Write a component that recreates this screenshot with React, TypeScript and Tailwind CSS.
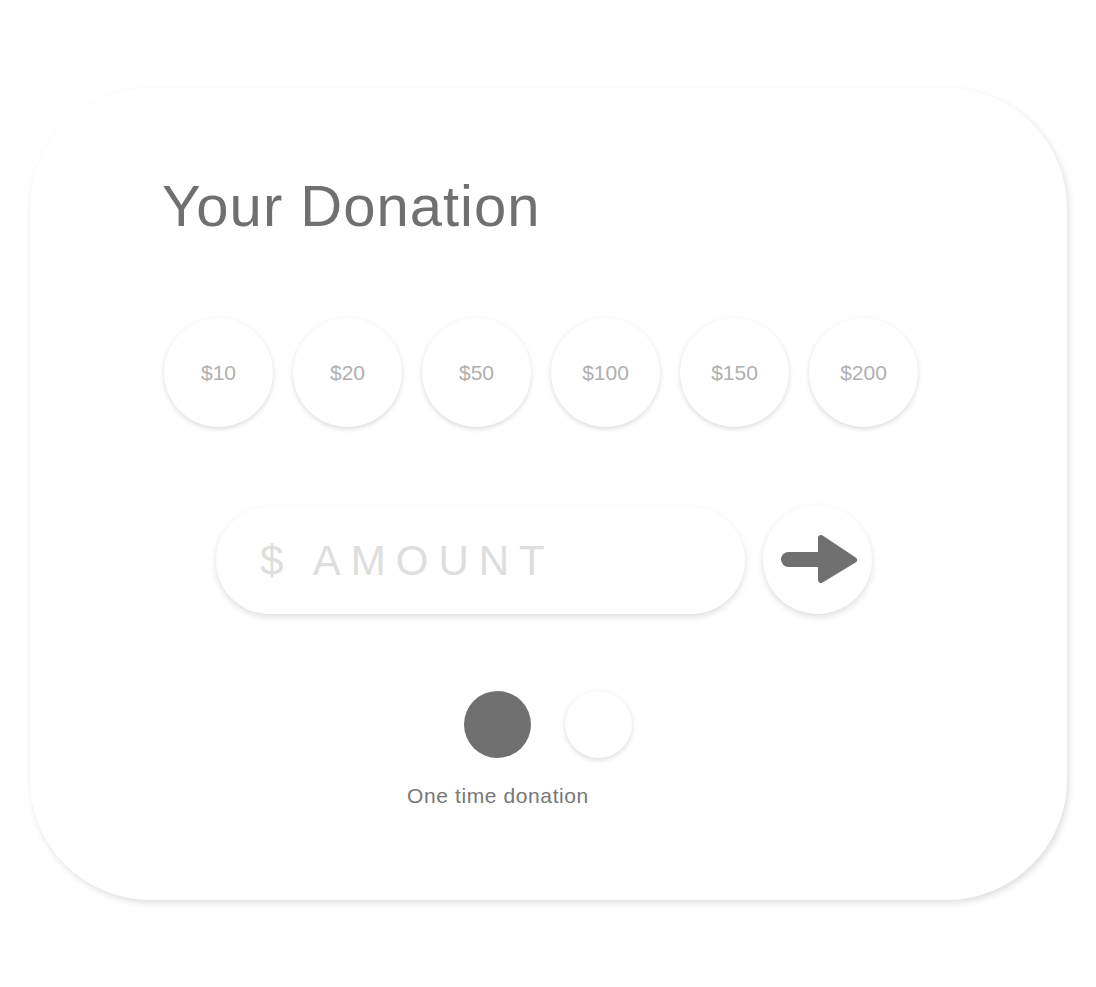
import React, { useState } from 'react';

const amounts = ['$10', '$20', '$50', '$100', '$150', '$200'];

export default function App() {
  const [amount, setAmount] = useState('');
  const [recurring, setRecurring] = useState(false);

  return (
    <div className="min-h-screen bg-white font-['Liberation_Sans',Arial,sans-serif]">
      <div className="pt-[88px] pl-[30px]">
        {/* Card */}
        <div className="w-[1037px] h-[812px] bg-white rounded-[120px] shadow-[2px_3px_6px_rgba(0,0,0,0.13)] pt-[89px] pl-[132px]">
          <h1 className="text-[58px] leading-none tracking-[1px] text-[#707070]">Your Donation</h1>

          {/* Preset amounts */}
          <div className="mt-[83px] ml-[2px] flex gap-[20px]">
            {amounts.map((a) => (
              <button
                key={a}
                onClick={() => setAmount(a.slice(1))}
                className="w-[109px] h-[109px] rounded-full bg-white shadow-[0_2px_5px_rgba(0,0,0,0.14)] text-[21px] text-[#b0b0b0] flex items-center justify-center"
              >
                {a}
              </button>
            ))}
          </div>

          {/* Custom amount */}
          <div className="mt-[78px] ml-[54px] flex items-center gap-[18px]">
            <input
              value={amount}
              onChange={(e) => setAmount(e.target.value)}
              placeholder="$ AMOUNT"
              className="w-[529px] h-[107px] mt-[2px] rounded-full bg-white shadow-[0_3px_6px_rgba(0,0,0,0.13)] pl-[44px] text-[42px] tracking-[10px] text-[#707070] placeholder:text-[#dedede] outline-none"
            />
            <button className="w-[109px] h-[109px] rounded-full bg-white shadow-[0_3px_6px_rgba(0,0,0,0.13)] relative">
              <svg className="absolute inset-0" width="109" height="109" viewBox="0 0 109 109">
                <rect x="18" y="47" width="44" height="15" rx="7.5" fill="#707070" />
                <polygon
                  points="58,33 91,55 58,75"
                  fill="#707070"
                  stroke="#707070"
                  strokeWidth="6"
                  strokeLinejoin="round"
                />
              </svg>
            </button>
          </div>

          {/* Frequency toggle */}
          <div className="mt-[77px] ml-[302px] flex gap-[34px]">
            <button
              onClick={() => setRecurring(false)}
              className={`w-[67px] h-[67px] rounded-full ${!recurring ? 'bg-[#707070]' : 'bg-white shadow-[0_2px_5px_rgba(0,0,0,0.14)]'}`}
            />
            <button
              onClick={() => setRecurring(true)}
              className={`w-[67px] h-[67px] rounded-full ${recurring ? 'bg-[#707070]' : 'bg-white shadow-[0_2px_5px_rgba(0,0,0,0.14)]'}`}
            />
          </div>
          <p className="mt-[26px] ml-[236px] w-[200px] text-center text-[21px] leading-[24px] tracking-[0.6px] text-[#777777]">
            {recurring ? 'Monthly donation' : 'One time donation'}
          </p>
        </div>
      </div>
    </div>
  );
}
